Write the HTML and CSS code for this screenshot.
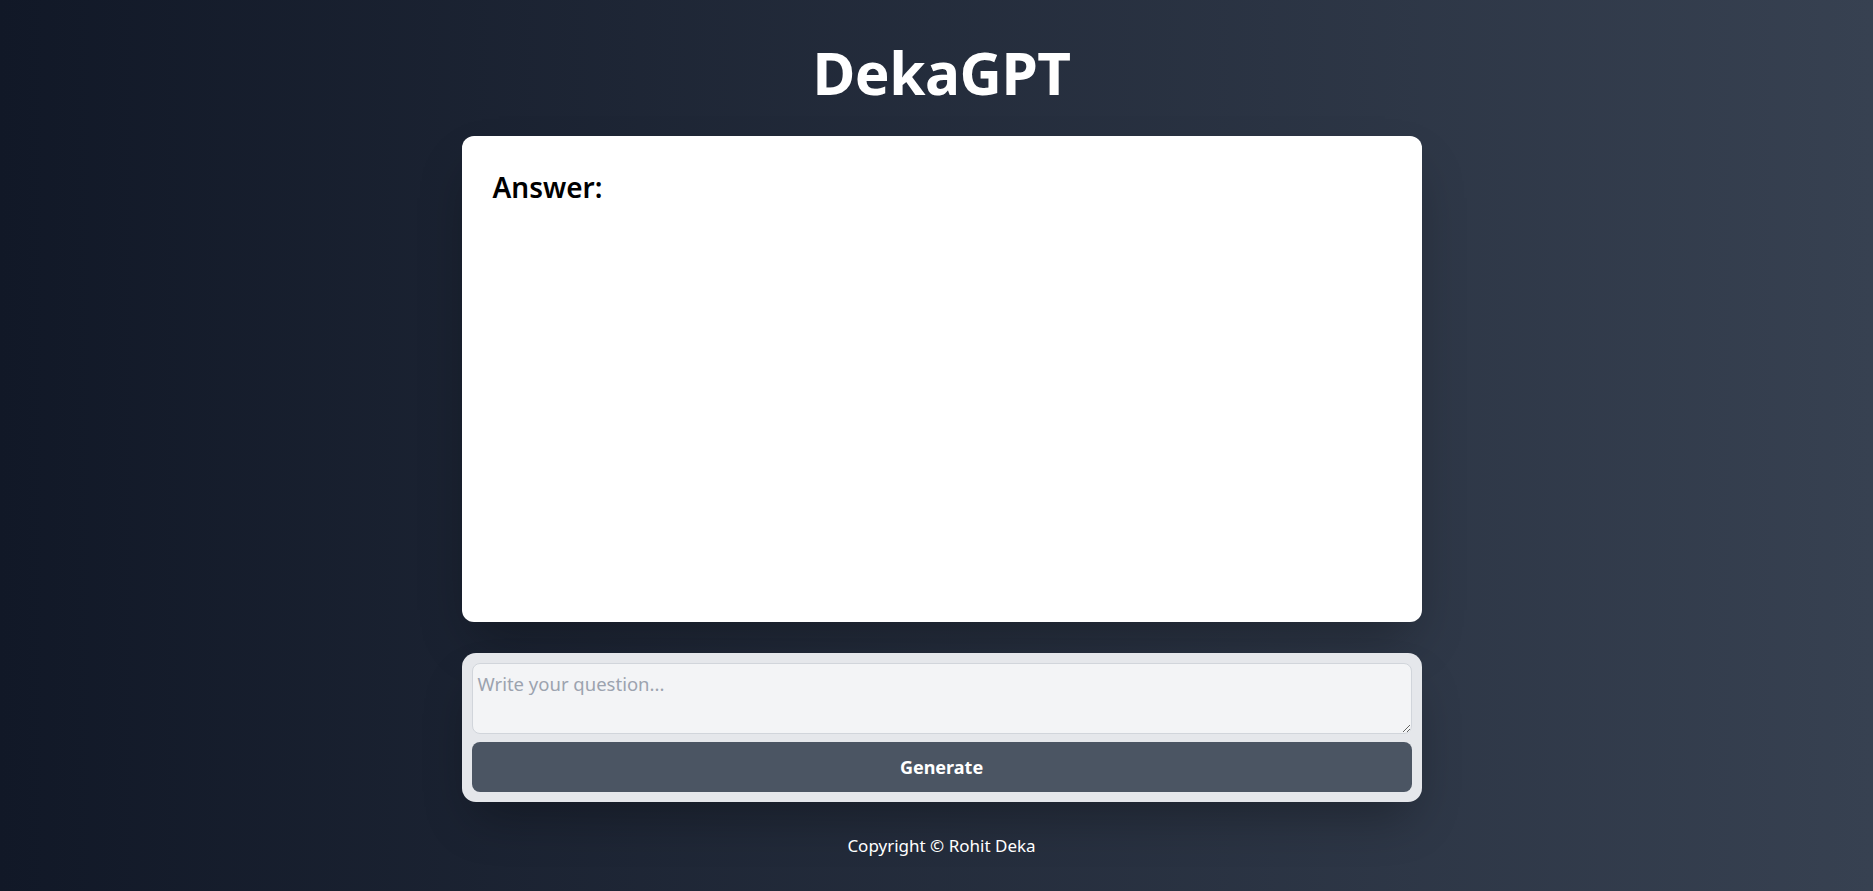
FILE: index.html
```html
<!DOCTYPE html>
<html lang="en">
<head>
<meta charset="utf-8">
<title>DekaGPT</title>
<link rel="stylesheet" href="styles.css">
</head>
<body>
<main class="wrap">
  <h1 class="title">DekaGPT</h1>
  <section class="answer-card">
    <h2 class="answer-label">Answer:</h2>
  </section>
  <form class="ask">
    <textarea class="ask-input" placeholder="Write your question..."></textarea>
    <button type="button" class="ask-btn">Generate</button>
  </form>
  <footer class="footer">Copyright © Rohit Deka</footer>
</main>
</body>
</html>
```
FILE: styles.css
```css
html, body {
  margin: 0;
  padding: 0;
}
body {
  min-height: 100vh;
  background: linear-gradient(to right, #111827, #374151);
  font-family: "Noto Sans", "Open Sans", sans-serif;
  color: #fff;
}
.wrap {
  display: flex;
  flex-direction: column;
  align-items: center;
  padding-left: 10px;
}
.title {
  margin: 37px 0 28px;
  font-size: 58.5px;
  line-height: 71px;
  font-weight: 700;
  letter-spacing: -0.5px;
  color: #fff;
}
.answer-card {
  box-sizing: border-box;
  width: 960px;
  height: 486px;
  background: #fff;
  border-radius: 12px;
  padding: 33px 32px 32px 31px;
  box-shadow: 0 25px 50px -12px rgba(0, 0, 0, 0.3);
}
.answer-label {
  margin: 0;
  font-size: 28px;
  line-height: 36px;
  font-weight: 600;
  color: #000;
}
.ask {
  box-sizing: border-box;
  width: 960px;
  margin-top: 31px;
  background: #e5e7eb;
  border-radius: 14px;
  padding: 10px;
  display: flex;
  flex-direction: column;
  gap: 8px;
  box-shadow: 0 25px 50px -12px rgba(0, 0, 0, 0.3);
}
.ask-input {
  box-sizing: border-box;
  height: 71px;
  background: #f3f4f6;
  border: 1px solid #d1d5db;
  border-radius: 8px;
  padding: 7px 5px 5px;
  font-family: inherit;
  font-size: 18.5px;
  line-height: 26px;
  color: #111827;
  outline: none;
}
.ask-input::placeholder {
  color: #9ca3af;
}
.ask-btn {
  height: 50px;
  border: none;
  border-radius: 8px;
  background: #4b5563;
  color: #fff;
  font-family: inherit;
  font-size: 18px;
  font-weight: 700;
  cursor: pointer;
}
.footer {
  margin-top: 31px;
  font-size: 17px;
  line-height: 25px;
  color: #fff;
}
```
